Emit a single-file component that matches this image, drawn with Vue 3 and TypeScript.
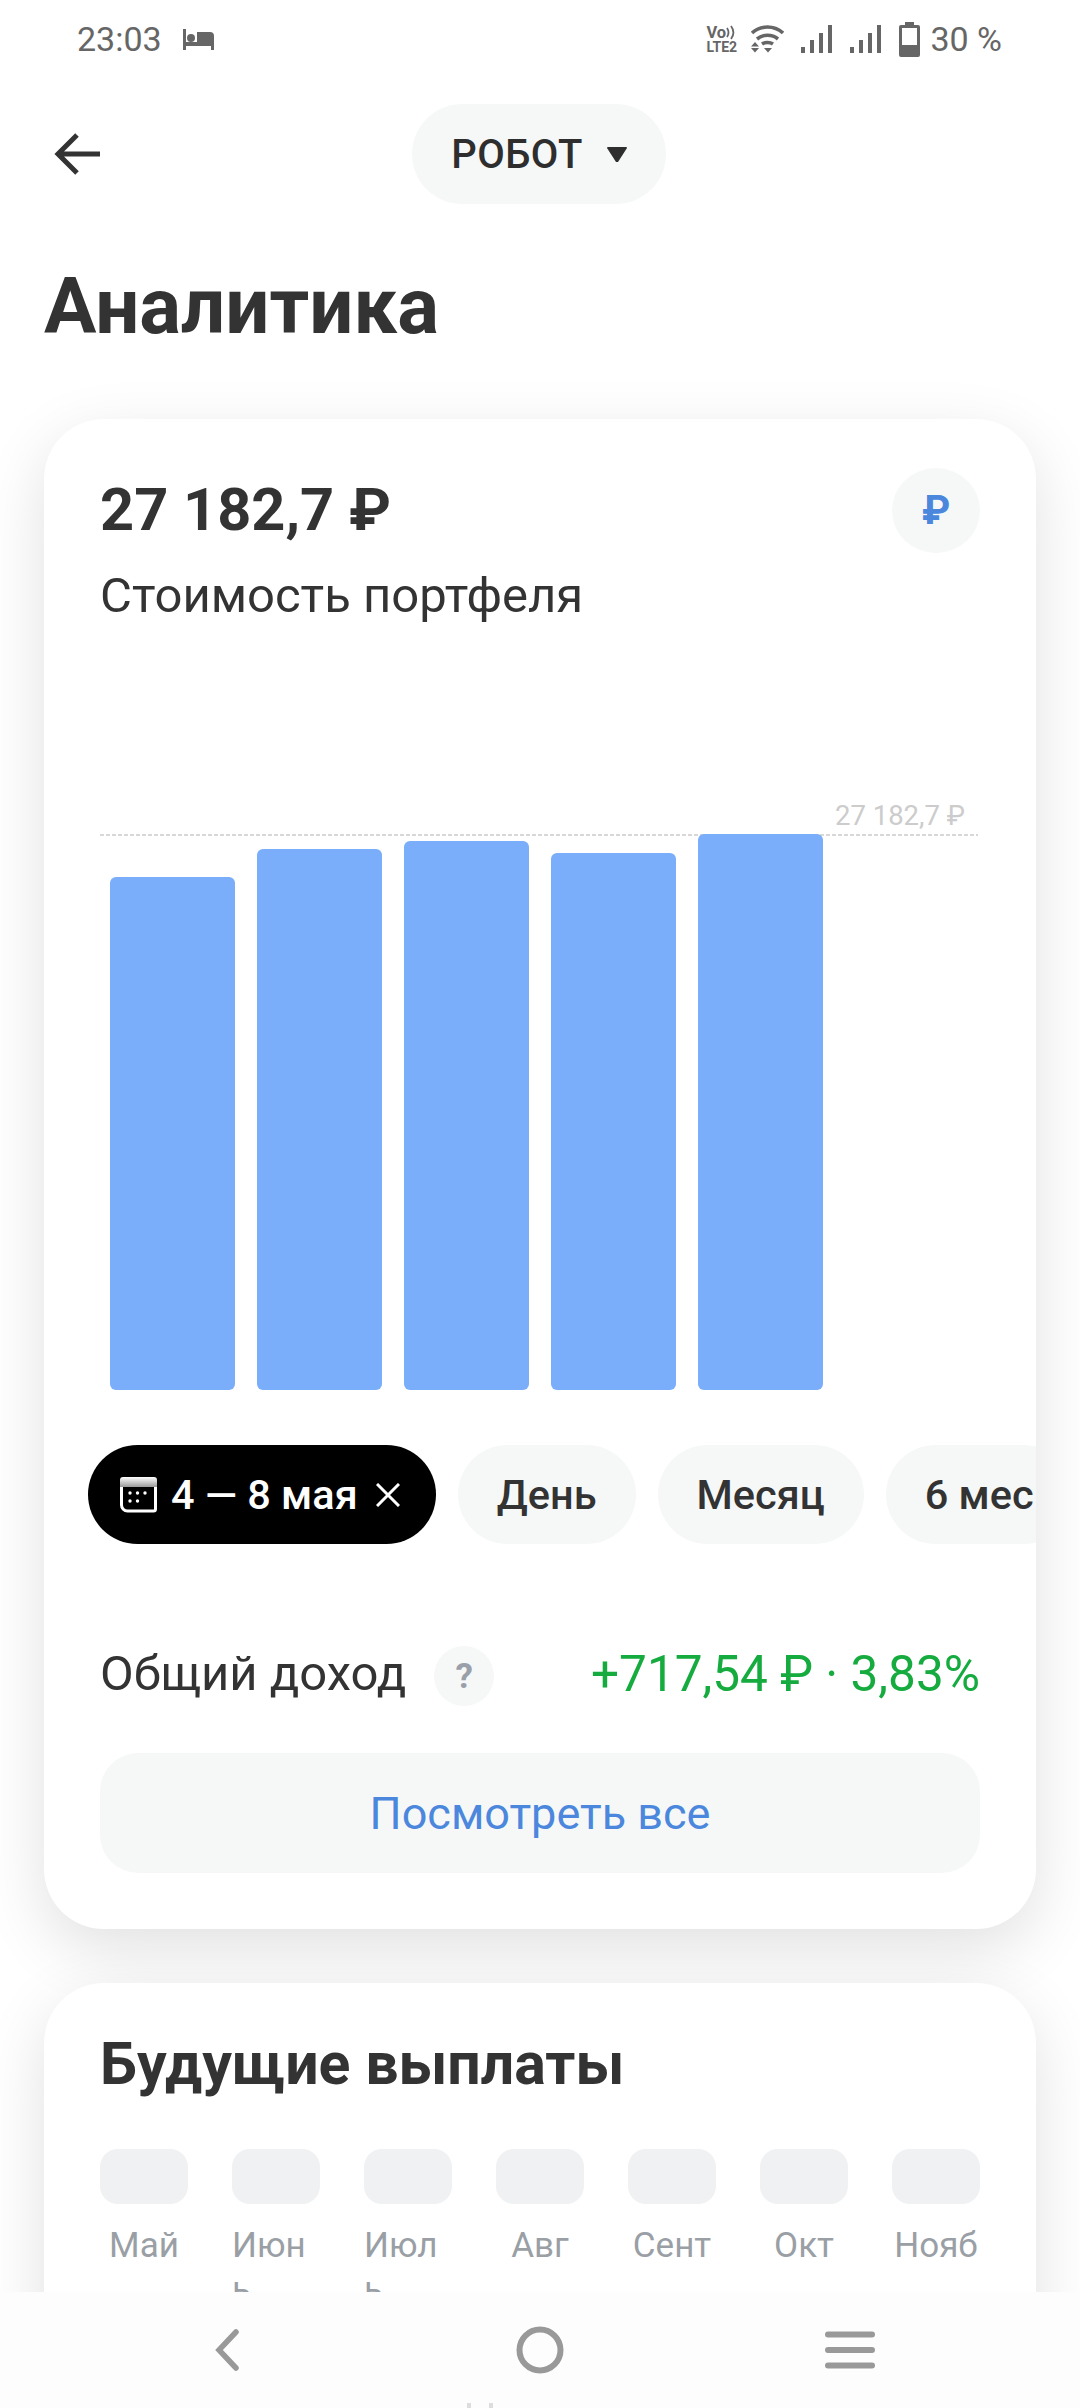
<script setup lang="ts">
const bars = [
  { h: 513 },
  { h: 541 },
  { h: 549 },
  { h: 537 },
  { h: 556 },
]
const months = ['Май', 'Июнь', 'Июль', 'Авг', 'Сент', 'Окт', 'Нояб']
const chips = ['День', 'Месяц', '6 мес']
</script>

<template>
  <div class="screen">
    <header class="status">
      <div class="status-left">
        <span class="time">23:03</span>
        <svg width="31" height="21" viewBox="0 0 31 21">
          <path fill="#666" d="M0 0h3v21H0zM3 13h28v8h-3v-4H3zM14 3h13a4 4 0 0 1 4 4v7H14z" />
          <circle cx="8" cy="9" r="4" fill="#666" />
        </svg>
      </div>
      <div class="status-right">
        <div class="volte">
          <div class="vo">
            <span>Vo</span>
            <svg width="10" height="15" viewBox="0 0 10 15">
              <path d="M1 3c2 3 2 6 0 9M5 1c3 4 3 9 0 13" fill="none" stroke="#666" stroke-width="1.800" />
            </svg>
          </div>
          <div class="lte">LTE2</div>
        </div>
        <svg class="wifi" width="33" height="28" viewBox="0 0 33 28">
          <path d="M1 8c9-8 22-8 31 0M6 14c6-5 15-5 21 0M11 19c3-2 8-2 11 0" fill="none" stroke="#666" stroke-width="3.600" />
          <path fill="#666" d="M4 17l4 4.500H0zM0 23h8l-4 4.500zM13 23h8l-4 4.500z" />
        </svg>
        <svg class="sig first" width="31" height="28" viewBox="0 0 31 28">
          <path fill="#666" d="M0 22h4v6H0zM9 15h4v13H9zM18 8h4v20h-4zM27 0h4v28h-4z" />
        </svg>
        <svg class="sig" width="31" height="28" viewBox="0 0 31 28">
          <path fill="#666" d="M0 22h4v6H0zM9 15h4v13H9zM18 8h4v20h-4zM27 0h4v28h-4z" />
        </svg>
        <svg class="batt" width="21" height="35" viewBox="0 0 21 35">
          <path fill="#666" d="M6 0h9v3h4a2 2 0 0 1 2 2v28a2 2 0 0 1-2 2H2a2 2 0 0 1-2-2V5a2 2 0 0 1 2-2h4zM3 6v17h15V6z" />
        </svg>
        <span class="pct">30 %</span>
      </div>
    </header>

    <div class="toolbar">
      <svg class="back" width="48" height="44" viewBox="0 0 48 44">
        <path d="M46 22H4M23 3 4 22l19 19" fill="none" stroke="#333" stroke-width="5" />
      </svg>
      <div class="selector">
        <span>РОБОТ</span>
        <svg width="20" height="15" viewBox="0 0 20 15"><path fill="#2e2e2e" d="M1 0h18a1 1 0 0 1 1 1L11 15h-2L0 1a1 1 0 0 1 1-1z" /></svg>
      </div>
    </div>

    <h1 class="title">Аналитика</h1>

    <section class="card main">
      <div class="head">
        <div>
          <div class="amount">27 182,7 ₽</div>
          <div class="sub">Стоимость портфеля</div>
        </div>
        <div class="cur">₽</div>
      </div>

      <div class="chart">
        <span class="max">27 182,7 ₽</span>
        <div class="dash"></div>
        <div class="bars">
          <div v-for="(b, i) in bars" :key="i" class="bar" :style="{ height: b.h + 'px' }"></div>
        </div>
      </div>

      <div class="chips">
        <div class="chip active">
          <svg width="37" height="36" viewBox="0 0 37 36">
            <defs>
              <linearGradient id="calTop" x1="0" y1="0" x2="0" y2="1">
                <stop offset="0" stop-color="#fff" />
                <stop offset="1" stop-color="#999" />
              </linearGradient>
            </defs>
            <path d="M1.500 9v19a6 6 0 0 0 6 6h26a2 2 0 0 0 2-2V9" fill="none" stroke="#fff" stroke-width="3" />
            <path fill="url(#calTop)" d="M3 0h31a3 3 0 0 1 3 3v7H0V3a3 3 0 0 1 3-3z" />
            <circle cx="10" cy="16" r="1.700" fill="#fff" />
            <circle cx="17.500" cy="16" r="1.700" fill="#fff" />
            <circle cx="25" cy="16" r="1.700" fill="#fff" />
            <circle cx="10" cy="24" r="1.700" fill="#fff" />
            <circle cx="17.500" cy="24" r="1.700" fill="#fff" />
          </svg>
          <span>4 — 8 мая</span>
          <svg class="x" width="24" height="24" viewBox="0 0 24 24">
            <path d="M1 1l22 22M23 1 1 23" stroke="#fff" stroke-width="3" fill="none" />
          </svg>
        </div>
        <div v-for="c in chips" :key="c" class="chip">{{ c }}</div>
      </div>

      <div class="income">
        <div class="income-left">
          <span class="income-text">Общий доход</span>
          <span class="q">?</span>
        </div>
        <span class="value income-text">+717,54 ₽ · 3,83%</span>
      </div>

      <div class="all">Посмотреть все</div>
    </section>

    <section class="card future">
      <h2>Будущие выплаты</h2>
      <div class="months">
        <div v-for="m in months" :key="m" class="month">
          <div class="block"></div>
          <div class="label">{{ m }}</div>
        </div>
      </div>
    </section>

    <nav class="nav">
      <svg width="50" height="50" viewBox="0 0 50 50">
        <path d="M31 7 14 25l17 18" fill="none" stroke="#999" stroke-width="5.500" stroke-linecap="round" />
      </svg>
      <svg width="50" height="50" viewBox="0 0 50 50">
        <circle cx="25" cy="25" r="20.500" fill="none" stroke="#999" stroke-width="6" />
      </svg>
      <svg width="50" height="40" viewBox="0 0 50 40">
        <path d="M3 4.500h44M3 20h44M3 35.500h44" stroke="#999" stroke-width="6" stroke-linecap="round" />
      </svg>
      <div class="marks"></div>
    </nav>
  </div>
</template>

<style>
html, body { margin: 0; background: #fff; }
</style>

<style scoped>
.screen {
  position: relative;
  width: 1080px;
  height: 2408px;
  overflow: hidden;
  background: #fff;
  font-family: Roboto, "Noto Sans", sans-serif;
  color: #2e2e2e;
}
.status {
  height: 78px;
  padding: 0 78px 0 77px;
  display: flex;
  justify-content: space-between;
  align-items: center;
  color: #666;
  font-size: 34px;
}
.status-left, .status-right { display: flex; align-items: center; }
.status-left { gap: 21px; }
.volte { width: 38px; font-weight: 700; color: #666; }
.vo { display: flex; align-items: center; gap: 0; height: 15px; font-size: 16.500px; line-height: 15px; }
.lte { height: 14px; font-size: 14px; line-height: 14px; white-space: nowrap; }
.wifi { margin-left: 7px; }
.sig.first { margin-left: 17px; }
.sig { margin-left: 18px; }
.batt { margin-left: 18px; }
.pct { margin-left: 10px; }
.toolbar {
  position: relative;
  height: 100px;
  margin-top: 26px;
  padding-right: 2px;
  display: flex;
  align-items: center;
  justify-content: center;
}
.back { position: absolute; left: 54px; top: 28px; }
.selector {
  width: 254px;
  height: 100px;
  box-sizing: border-box;
  border-radius: 50px;
  background: #f6f8f8;
  display: flex;
  align-items: center;
  justify-content: center;
  gap: 24px;
  font-size: 40px;
  font-weight: 500;
  letter-spacing: 0.500px;
}
.title {
  margin: 61px 0 0 44px;
  font-size: 78px;
  line-height: 84px;
  font-weight: 700;
  color: #333;
}
.card {
  margin: 0 44px;
  background: #fff;
  border-radius: 60px;
  box-shadow: 0 20px 64px rgba(0, 0, 0, 0.12);
  box-sizing: border-box;
}
.main {
  margin-top: 70px;
  height: 1510px;
  padding: 56px 56px 0;
  overflow: hidden;
}
.head { display: flex; justify-content: space-between; align-items: flex-start; }
.amount { font-size: 59.500px; line-height: 70px; font-weight: 700; color: #333; }
.sub { margin-top: 22px; font-size: 49px; line-height: 58px; color: #333; }
.cur {
  width: 88px;
  height: 85px;
  margin-top: -7px;
  border-radius: 50%;
  background: #f6f8f8;
  color: #4b87dc;
  font-size: 40px;
  font-weight: 700;
  display: flex;
  align-items: center;
  justify-content: center;
}
.chart {
  position: relative;
  height: 596px;
  margin-top: 169px;
  margin-right: 2px;
}
.max {
  position: absolute;
  right: 13px;
  top: 4px;
  font-size: 27.500px;
  line-height: 36px;
  color: #ccc;
}
.dash {
  position: absolute;
  left: 0;
  right: 0;
  top: 40px;
  height: 2px;
  background: repeating-linear-gradient(90deg, #d8d8d8 0 4px, transparent 4px 6px);
}
.bars {
  position: absolute;
  left: 10px;
  bottom: 0;
  display: flex;
  align-items: flex-end;
  gap: 22px;
}
.bar {
  width: 125px;
  background: #7aadfa;
  border-radius: 6px;
}
.chips {
  display: flex;
  gap: 22px;
  margin: 55px -56px 0 -12px;
  overflow: hidden;
}
.chip {
  flex: none;
  height: 99px;
  padding: 0 39px;
  border-radius: 50px;
  background: #f6f8f8;
  display: flex;
  align-items: center;
  font-size: 41.500px;
  font-weight: 500;
  color: #333;
}
.chip.active {
  background: #000;
  color: #fff;
  padding: 0 36px 0 32px;
  gap: 14px;
}
.x { margin-left: 4px; }
.income {
  margin-top: 102px;
  display: flex;
  justify-content: space-between;
  align-items: center;
  font-size: 49px;
  height: 60px;
  color: #333;
}
.income-left { display: flex; align-items: center; gap: 28px; }
.income-text { padding-bottom: 5px; }
.q {
  width: 60px;
  height: 60px;
  border-radius: 50%;
  background: #f6f8f8;
  color: #9aa0aa;
  font-size: 35px;
  font-weight: 700;
  display: flex;
  align-items: center;
  justify-content: center;
}
.value { color: #16ab3f; font-size: 49.500px; }
.all {
  margin-top: 47px;
  height: 120px;
  border-radius: 38px;
  background: #f6f8f8;
  color: #4b87dc;
  font-size: 45px;
  display: flex;
  align-items: center;
  justify-content: center;
}
.future {
  margin-top: 54px;
  height: 600px;
  padding: 48px 56px 0;
}
h2 {
  margin: 0;
  font-size: 59px;
  line-height: 66px;
  font-weight: 700;
  color: #333;
}
.months {
  margin-top: 52px;
  display: flex;
  justify-content: space-between;
}
.month {
  width: 88px;
  display: flex;
  flex-direction: column;
  align-items: center;
}
.block {
  width: 88px;
  height: 55px;
  border-radius: 18px;
  background: #eff1f2;
}
.label {
  margin-top: 20px;
  font-size: 35px;
  line-height: 44px;
  color: #9a9fa6;
  overflow-wrap: anywhere;
}
.nav {
  position: absolute;
  left: 0;
  right: 0;
  bottom: 0;
  height: 116px;
  box-sizing: border-box;
  padding: 0 205px;
  background: #fdfdfd;
  display: flex;
  justify-content: space-between;
  align-items: center;
}
.marks {
  position: absolute;
  left: 467px;
  bottom: 0;
  width: 18px;
  height: 5px;
  border-left: 4px solid #ddd;
  border-right: 4px solid #ddd;
}
</style>
